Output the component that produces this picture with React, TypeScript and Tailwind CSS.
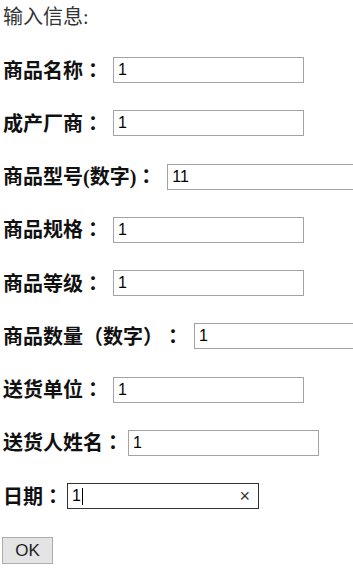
const fieldFont = { fontFamily: '"Liberation Sans", Arial, sans-serif' };

type Row = { label: string; gap: string; value: string };

const rows: Row[] = [
  { label: "商品名称", gap: "ml-[10px]", value: "1" },
  { label: "成产厂商", gap: "ml-[10px]", value: "1" },
  { label: "商品型号(数字)", gap: "ml-[11px]", value: "11" },
  { label: "商品规格", gap: "ml-[10px]", value: "1" },
  { label: "商品等级", gap: "ml-[10px]", value: "1" },
  { label: "商品数量（数字）", gap: "ml-[11px]", value: "1" },
  { label: "送货单位", gap: "ml-[10px]", value: "1" },
  { label: "送货人姓名", gap: "ml-[5px]", value: "1" },
];

// centred full-width colon, as in the original page's font
const Colon = () => <span className="font-['Noto_Sans_CJK_TC',sans-serif]">：</span>;

const App = () => {
  return (
    <div className="min-h-[570px] overflow-x-hidden bg-white pl-[3px] font-['Liberation_Serif','Noto_Sans_CJK_SC',serif] text-[20px] [text-spacing-trim:space-all]">
      <div className="pt-[7px] leading-[20px] text-[#333]">输入信息:</div>

      <form className="mt-[30px] flex flex-col gap-[27.25px]" onSubmit={(e) => e.preventDefault()}>
        {rows.map((row) => (
          <div key={row.label} className="flex h-[26px] items-center whitespace-nowrap">
            <span className="font-bold text-[#111] leading-[20px]">
              {row.label}
              <Colon />
            </span>
            <input
              readOnly
              value={row.value}
              style={fieldFont}
              className={`${row.gap} h-[26px] w-[191px] shrink-0 border border-[#a3a3a3] bg-white px-[4px] text-[16px] text-black outline-none`}
            />
          </div>
        ))}

        <div className="flex h-[26px] items-center whitespace-nowrap">
          <span className="font-bold text-[#111] leading-[20px]">
            日期
            <Colon />
          </span>
          <div
            style={fieldFont}
            className="ml-[4px] flex h-[26px] w-[192px] shrink-0 items-center border border-[#333] bg-white pl-[4px] pr-[8px] text-[16px] text-black"
          >
            <span>1</span>
            <span className="ml-[1px] h-[17px] w-px bg-black" />
            <span className="ml-auto text-[18px] leading-none text-[#333]">×</span>
          </div>
        </div>

        <div className="flex pt-[1px]">
          <button
            type="submit"
            style={fieldFont}
            className="-ml-[1px] h-[27px] w-[51px] border border-[#adadad] bg-[#e4e4e4] text-[17px] text-[#222]"
          >
            OK
          </button>
        </div>
      </form>
    </div>
  );
};

export default App;
